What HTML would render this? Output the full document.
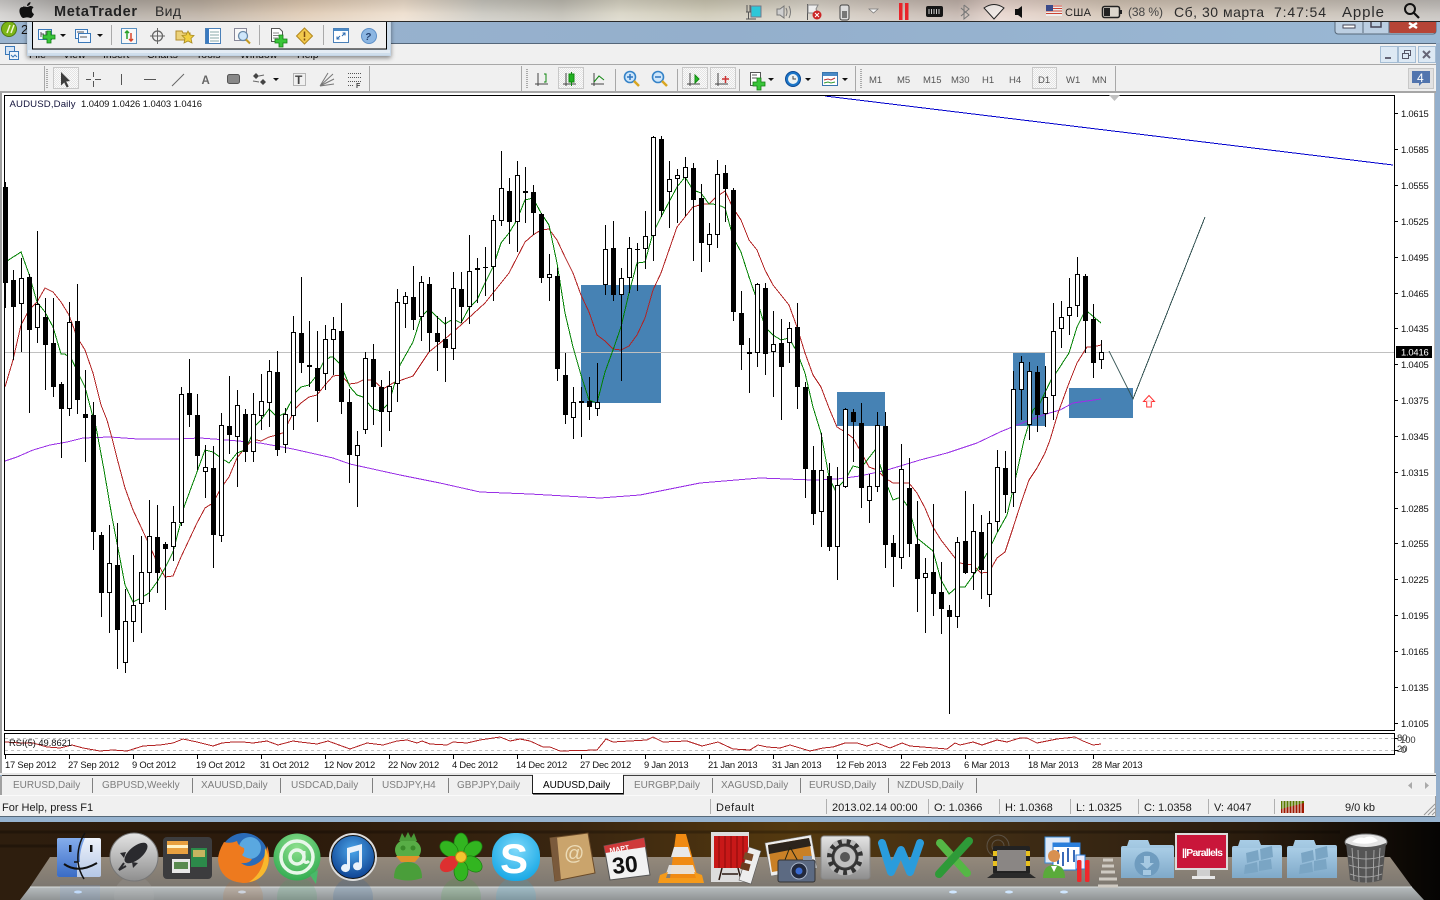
<!DOCTYPE html>
<html><head><meta charset="utf-8"><title>MetaTrader</title>
<style>
html,body{margin:0;padding:0;width:1440px;height:900px;overflow:hidden;background:#000}
svg{display:block}
text{font-family:"Liberation Sans","Noto Sans CJK SC",sans-serif;font-size:10px;fill:#111}
.ax text,.ax{font-size:9.4px;fill:#111;letter-spacing:-.2px}
.tab{font-size:10px;fill:#7d7d7d}
.st{font-size:11px;fill:#1c1c1c}
.tf{font-size:9.5px;fill:#555}
.mn{font-size:14px;fill:#2b2b2b}
.c{shape-rendering:crispEdges}
</style></head><body>
<svg width="1440" height="900" viewBox="0 0 1440 900" xmlns="http://www.w3.org/2000/svg">
<defs>
<linearGradient id="mb" x1="0" x2="1" y1="0" y2="0">
<stop offset="0" stop-color="#cfcdcb"/><stop offset=".05" stop-color="#a9a6a3"/><stop offset=".14" stop-color="#b8ab9d"/><stop offset=".21" stop-color="#dcc6ae"/><stop offset=".28" stop-color="#ecdcca"/><stop offset=".335" stop-color="#c6c4bc"/><stop offset=".39" stop-color="#bcb9af"/><stop offset=".43" stop-color="#d6d2c2"/><stop offset=".49" stop-color="#c9c4b0"/><stop offset=".56" stop-color="#d5cfc4"/><stop offset=".665" stop-color="#bfb0a8"/><stop offset=".695" stop-color="#e6d2ca"/><stop offset=".77" stop-color="#cfc0b0"/><stop offset=".9" stop-color="#c8beb2"/><stop offset="1" stop-color="#c0bcb8"/>
</linearGradient>
<linearGradient id="mbv" x1="0" x2="0" y1="0" y2="1"><stop offset="0" stop-color="#000" stop-opacity=".1"/><stop offset=".6" stop-color="#fff" stop-opacity=".12"/><stop offset="1" stop-color="#fff" stop-opacity=".3"/></linearGradient>
<linearGradient id="dk" x1="0" x2="1" y1="0" y2="0">
<stop offset="0" stop-color="#2e1e0e"/><stop offset=".2" stop-color="#2b1a0c"/><stop offset=".4" stop-color="#3a2610"/><stop offset=".55" stop-color="#54390f"/><stop offset=".72" stop-color="#3c2a14"/><stop offset=".87" stop-color="#2a1c0e"/><stop offset=".96" stop-color="#120c06"/><stop offset="1" stop-color="#050403"/>
</linearGradient>
<linearGradient id="sh" x1="0" x2="0" y1="0" y2="1"><stop offset="0" stop-color="#94897b"/><stop offset="1" stop-color="#7c7770"/></linearGradient>
<linearGradient id="ban" x1="0" x2="0" y1="0" y2="1"><stop offset="0" stop-color="#b6bcbe"/><stop offset="1" stop-color="#8f9394"/></linearGradient>
<linearGradient id="fold" x1="0" x2="0" y1="0" y2="1"><stop offset="0" stop-color="#a9cde6"/><stop offset="1" stop-color="#7fa9c9"/></linearGradient>
<linearGradient id="silver" x1="0" x2="0" y1="0" y2="1"><stop offset="0" stop-color="#e4e4e4"/><stop offset="1" stop-color="#8e8e8e"/></linearGradient>
<linearGradient id="fin" x1="0" x2="0" y1="0" y2="1"><stop offset="0" stop-color="#85adec"/><stop offset="1" stop-color="#3a6cc6"/></linearGradient>
<linearGradient id="fin2" x1="0" x2="0" y1="0" y2="1"><stop offset="0" stop-color="#eef3fb"/><stop offset="1" stop-color="#b5c7e6"/></linearGradient>
<radialGradient id="blu" cx=".5" cy=".35" r=".7"><stop offset="0" stop-color="#4ba6ea"/><stop offset="1" stop-color="#0a3b8c"/></radialGradient>
<radialGradient id="sky" cx=".5" cy=".35" r=".7"><stop offset="0" stop-color="#7fd9fa"/><stop offset="1" stop-color="#12a5e4"/></radialGradient>
<radialGradient id="grn" cx=".5" cy=".3" r=".8"><stop offset="0" stop-color="#8de08d"/><stop offset="1" stop-color="#27a54a"/></radialGradient>
<linearGradient id="tit" x1="0" x2="1" y1="0" y2="0"><stop offset="0" stop-color="#9ab4cf"/><stop offset=".5" stop-color="#94afcc"/><stop offset="1" stop-color="#9ab8d4"/></linearGradient>
<pattern id="dot" width="2" height="2" patternUnits="userSpaceOnUse"><rect width="2" height="2" fill="#fafafa"/><rect width="1" height="1" fill="#e4e4e4"/><rect x="1" y="1" width="1" height="1" fill="#e4e4e4"/></pattern>
<path id="plus" d="M-2-6h4v4h4v4h-4v4h-4v-4h-4v-4h4z" fill="#39c539" stroke="#137d13" stroke-width=".8"/>
<path id="dd" d="M0 0h6l-3 3z" fill="#111"/>
<filter id="ds" x="-5%" y="-20%" width="110%" height="150%"><feDropShadow dx="0" dy="2" stdDeviation="2.5" flood-color="#000" flood-opacity=".45"/></filter>
</defs>

<!-- window base -->
<rect width="1440" height="900" fill="#94afcc"/>
<rect y="22" width="1440" height="21" fill="url(#tit)"/>
<rect y="43" width="1436" height="1" fill="#55677a"/>
<rect x="0" y="44" width="1436" height="21" fill="#f0f0f0"/>
<rect x="0" y="64" width="1436" height="1" fill="#a8a8a8"/>
<rect x="0" y="65" width="1436" height="26" fill="#f0f0f0"/>
<rect x="0" y="91" width="1436" height="2" fill="#a6a6a6"/>
<rect x="0" y="93" width="1435" height="682" fill="#fff"/>
<rect x="0" y="93" width="2" height="682" fill="#a0a0a0"/>
<rect x="1434" y="93" width="1" height="682" fill="#bcbcbc"/>

<!-- menu text under floating toolbar -->
<g><text x="29" y="58" style="font-size:10.5px">File</text><text x="63" y="58" style="font-size:10.5px">View</text><text x="103" y="58" style="font-size:10.5px">Insert</text><text x="147" y="58" style="font-size:10.5px">Charts</text><text x="196" y="58" style="font-size:10.5px">Tools</text><text x="240" y="58" style="font-size:10.5px">Window</text><text x="297" y="58" style="font-size:10.5px">Help</text></g>

<!-- doc icon -->
<g><rect x="5.5" y="46.5" width="9" height="8" fill="#d7e6f7" stroke="#3a78b8"/><rect x="9.5" y="51.5" width="9" height="8" fill="#eef5fb" stroke="#3a78b8"/><path d="M11 55l2 2 2-2 2 2" stroke="#3a78b8" fill="none"/></g>

<!-- title icon -->
<circle cx="9" cy="29" r="7.5" fill="#7cb518" stroke="#4c7a10"/>
<path d="M7 33l3-8M11 33l3-8" stroke="#f4f8d0" stroke-width="1.500"/>
<text x="21" y="34" style="font-size:13px">2</text>

<!-- top window controls -->
<rect x="1335" y="14" width="101" height="20" rx="3" fill="#bccfe2" stroke="#57687a"/>
<rect x="1389" y="15" width="47" height="18" rx="2" fill="#b64436"/>
<path d="M1363 15v18M1389 15v18" stroke="#57687a"/>
<rect x="1343" y="25" width="12" height="3" fill="#fff" stroke="#445"/>
<rect x="1371" y="19" width="10" height="8" fill="none" stroke="#445" stroke-width="1.5"/>
<path d="M1409 23l8 5M1417 23l-8 5" stroke="#fff" stroke-width="2.5"/>

<!-- right window buttons -->
<g fill="#dde9f4" stroke="#a5bdd4"><rect x="1380.5" y="46.5" width="17" height="16"/><rect x="1398.5" y="46.5" width="17" height="16"/><rect x="1418.5" y="46.5" width="17" height="16"/></g>
<path d="M1385 58h6" stroke="#667" stroke-width="2"/>
<rect x="1402.5" y="53.5" width="6" height="5" fill="none" stroke="#556"/><path d="M1404.5 53v-2.5h6v5h-2" fill="none" stroke="#556"/>
<path d="M1423 51l7 7M1430 51l-7 7" stroke="#667" stroke-width="2"/>
<rect x="1408.5" y="68.5" width="25" height="20" fill="#e2e2e2" stroke="#c8c8c8"/>
<path d="M1412 71h18v12h-8l-3 3v-3h-7z" fill="#5275ae"/><text x="1417" y="82" style="font-size:12px;fill:#fff">4</text>

<!-- toolbar row -->
<g class="c" stroke="#a8a8a8"><path d="M44.5 66v25M369.5 66v25M521.5 66v25M615.5 69v22M677.5 69v22M739.5 69v22M855.5 66v25M1115.5 66v25"/></g>
<path d="M47 69v20M527 69v20M861 69v20" stroke="#aaa" stroke-width="2" stroke-dasharray="1 1"/>
<g fill="url(#dot)" stroke="#c8c8c8"><rect x="53.5" y="67.5" width="25" height="21"/><rect x="558.5" y="67.5" width="25" height="21"/><rect x="682.5" y="67.5" width="25" height="21"/><rect x="710.5" y="67.5" width="25" height="21"/><rect x="1032.5" y="67.5" width="24" height="21"/></g>
<path d="M61 72l9 9-3.8.5 2.5 5-2 1-2.5-5-3.2 3z" fill="#3d3d3d"/>
<path d="M86 79.5h5M95 79.5h6M93.5 72v5M93.5 81v6" stroke="#555"/>
<path d="M121.5 74v11" stroke="#555"/><path d="M144 79.5h12" stroke="#555"/><path d="M172 86l12-12" stroke="#666"/>
<text x="201.500" y="84" style="font-size:11.5px;font-weight:bold;fill:#666">A</text>
<rect x="227.500" y="74.500" width="12" height="9" rx="2" fill="#888" stroke="#555"/>
<path d="M256 73l3 3-3 3-3-3zM263 79l3 3-3 3-3-3z" fill="#444"/><path d="M259 76l5-1M253 81l6 1" stroke="#666"/>
<use href="#dd" x="273" y="78"/>
<rect x="293.500" y="73.500" width="12" height="12" fill="none" stroke="#777" stroke-dasharray="1 1"/><text x="295" y="84" style="font-size:12px;font-weight:bold;fill:#444">T</text>
<path d="M320 86l13-12M320 86l14-7M320 86l14-2M320 86l8-13" stroke="#777"/>
<path d="M348 73.500h13M348 77.500h13M348 81.500h13M348 85.500h6" stroke="#555" stroke-dasharray="1 1"/><text x="356" y="88" style="font-size:7px;font-weight:bold;fill:#444">F</text>

<!-- chart type icons -->
<g stroke="#444" fill="none"><path d="M538 73v13M535 84h13"/><path d="M566 73v13M563 84h13"/><path d="M594 73v13M591 84h13"/><path d="M690 73v13M687 84h13"/><path d="M718 73v13M715 84h13"/></g>
<path d="M544 74h2v8h-2" stroke="#118811" fill="none"/>
<path d="M571.500 72v14" stroke="#118811"/><rect x="569" y="74" width="5" height="8" fill="#21b021" stroke="#118811"/>
<path d="M594 82l5-6 5 4" stroke="#118811" fill="none"/>
<path d="M695 75l4 4-4 4z" fill="#22bb22" stroke="#118811"/>
<path d="M722 79h7M725.500 76v7" stroke="#c33" stroke-width="1.5"/>

<!-- zoom icons -->
<g><circle cx="630" cy="77" r="5.500" fill="#cfe7fb" stroke="#3583c8" stroke-width="1.600"/><path d="M634 81l5 5" stroke="#d9a520" stroke-width="2.500"/><path d="M627 77h6M630 74v6" stroke="#2f75bf" stroke-width="1.500"/>
<circle cx="658" cy="77" r="5.500" fill="#cfe7fb" stroke="#3583c8" stroke-width="1.600"/><path d="M662 81l5 5" stroke="#d9a520" stroke-width="2.500"/><path d="M655 77h6" stroke="#2f75bf" stroke-width="1.500"/></g>

<!-- indicators -->
<rect x="750.500" y="72.500" width="10" height="13" fill="#fff" stroke="#555"/><path d="M752 75h5M752 78h5" stroke="#555"/><use href="#plus" x="759" y="84"/><use href="#dd" x="768" y="78"/>
<circle cx="793" cy="79" r="7.500" fill="#1d76c8" stroke="#0c4a94"/><circle cx="793" cy="79" r="5" fill="#eef3f3"/><path d="M793 76v3h3" stroke="#444" fill="none"/><use href="#dd" x="805" y="78"/>
<rect x="822.500" y="72.500" width="15" height="13" fill="#fff" stroke="#3975ad"/><rect x="823" y="73" width="14" height="3" fill="#4a8ac6"/><path d="M824 80l4-1 3 1 4-2" stroke="#b33" fill="none"/><path d="M824 83l4-1 3 1 4-1" stroke="#393" fill="none"/><use href="#dd" x="842" y="78"/>

<!-- timeframes -->
<text class="tf" x="869" y="83">M1</text><text class="tf" x="897" y="83">M5</text><text class="tf" x="923" y="83">M15</text><text class="tf" x="951" y="83">M30</text><text class="tf" x="982" y="83">H1</text><text class="tf" x="1009" y="83">H4</text><text class="tf" x="1038" y="83">D1</text><text class="tf" x="1066" y="83">W1</text><text class="tf" x="1092" y="83">MN</text>

<!-- chart -->
<g class="c">
<rect x="581" y="285" width="80" height="118" fill="#4682b4"/>
<rect x="837" y="392" width="48" height="34" fill="#4682b4"/>
<rect x="1013" y="353" width="32" height="73" fill="#4682b4"/>
<rect x="1069" y="388" width="64" height="30" fill="#4682b4"/>
<path d="M5 352.500H1394" stroke="#c0c0c0"/>
</g>
<g fill="none" stroke-width="1" class="c">
<polyline stroke="#9a30e6" points="5,461 17,457 33,450 50,445 67,442 83,438 110,437 138,439 177,439 200,438 227,440 260,443 293,449 333,458 350,464 400,475 440,483 480,492 530,494 600,498 640,495 700,483 760,478 813,480 837,479 860,476 887,470 920,460 947,453 977,443 1000,432 1017,425 1043,415 1060,410 1073,403 1101,399"/>
<polyline stroke="#b22222" points="5,387 13,360 21,325 29,310 37,302 45,288 53,292 61,302 69,315 77,337 85,350 93,373 101,405 107,420 112,438 117,458 125,488 133,510 141,527 147,540 157,562 165,577 173,576 181,557 197,523 205,508 213,503 221,488 229,477 237,458 245,448 253,439 261,441 269,437 277,435 285,432 288,423 296,408 301,403 309,397 317,395 325,385 333,376 341,375 349,384 357,383 363,380 373,380 383,389 393,383 413,376 429,352 445,339 461,325 485,303 493,293 509,273 525,242 533,235 541,230 549,229 557,240 565,257 573,273 581,295 589,312 597,335 605,341 613,349 621,350 629,346 637,335 645,318 653,290 661,273 669,250 677,227 685,217 693,207 703,204 709,204 715,198 725,191 733,208 741,220 749,240 757,250 765,270 773,285 781,295 789,305 797,327 805,353 813,375 821,387 829,408 837,427 845,432 853,438 861,452 869,467 877,470 885,478 893,483 909,483 917,493 925,508 933,527 941,540 955,558 960,563 973,565 981,573 989,572 997,558 1005,552 1013,528 1021,503 1029,480 1037,468 1045,453 1050,440 1058,413 1069,383 1077,363 1087,347 1093,347 1101,345"/>
<polyline stroke="#008000" points="7,261 21,252 29,274 37,302 45,312 53,327 61,354 65,354 72,360 80,377 85,387 93,417 96,427 104,470 112,517 117,543 125,585 133,602 141,598 149,593 157,582 165,568 173,552 180,525 184,507 197,472 205,450 213,452 221,458 229,463 237,453 245,450 253,433 256,425 261,420 269,409 277,417 285,413 296,392 301,387 309,385 317,375 323,363 330,357 333,357 341,365 350,387 357,395 363,397 373,409 381,411 389,403 400,365 413,342 421,317 429,309 437,317 445,324 453,319 461,323 469,308 477,300 485,283 493,267 501,243 509,233 517,220 525,200 533,198 541,213 549,225 557,263 565,313 573,347 581,375 589,400 597,403 605,372 613,350 621,327 629,293 637,263 645,262 653,233 661,217 669,202 677,187 685,177 693,190 701,193 709,204 713,204 721,206 725,208 733,237 741,252 749,277 757,300 765,327 773,335 781,340 789,338 797,352 805,373 813,407 821,433 829,477 835,490 845,480 853,466 861,468 875,450 885,480 893,500 901,497 909,508 917,538 933,551 941,580 949,594 957,587 965,587 977,570 989,550 997,533 1007,515 1013,490 1024,440 1033,410 1040,403 1052,378 1056,373 1069,353 1077,327 1083,315 1088,312 1101,323"/>
<path stroke="#0000cd" d="M825 96L1393 165"/>
<path stroke="#2f4f4f" d="M1109 351L1133 399L1205 217"/>
</g>

<!-- wicks -->
<path class="c" stroke="#000" fill="none" d="M5.500 182V308M13.500 270V360M21.500 258V352M29.500 274V413M37.500 231V343M45.500 298V390M53.500 298V397M61.500 382V458M69.500 302V416M77.500 284V414M85.500 370V462M93.500 402V550M101.500 532V617M109.500 525V633M117.500 523V669M125.500 589V673M133.500 555V642M141.500 536V633M149.500 500V602M157.500 505V593M165.500 542V610M173.500 506V561M181.500 387V526M189.500 359V427M197.500 394V470M205.500 445V498M213.500 446V568M221.500 413V542M229.500 376V454M237.500 390V487M245.500 409V462M253.500 393V462M261.500 374V430M269.500 360V427M277.500 351V456M285.500 408V453M293.500 316V430M301.500 277V373M309.500 321V387M317.500 331V422M325.500 325V390M333.500 317V375M341.500 303V414M349.500 389V483M357.500 431V507M365.500 352V434M373.500 344V425M381.500 380V447M389.500 371V431M397.500 289V402M405.500 292V328M413.500 266V330M421.500 276V341M429.500 277V352M437.500 316V371M445.500 317V382M453.500 272V360M461.500 272V323M469.500 235V324M477.500 258V303M485.500 247V296M493.500 215V301M501.500 151V226M509.500 178V244M517.500 161V252M525.500 167V223M533.500 185V235M541.500 213V283M549.500 254V301M557.500 268V381M565.500 353V424M573.500 387V439M581.500 387V437M589.500 377V420M597.500 363V416M605.500 225V295M613.500 221V301M621.500 268V381M629.500 237V293M637.500 243V291M645.500 211V269M653.500 136V261M661.500 136V217M669.500 161V228M677.500 169V223M685.500 157V216M693.500 163V261M701.500 184V272M709.500 223V262M717.500 160V248M725.500 165V222M733.500 188V321M741.500 291V370M749.500 338V393M757.500 283V367M765.500 283V375M773.500 311V397M781.500 319V420M789.500 322V363M797.500 303V409M805.500 382V498M813.500 446V525M821.500 433V547M829.500 463V551M837.500 467V580M845.500 408V488M853.500 409V462M861.500 403V508M869.500 474V523M877.500 412V492M885.500 412V568M893.500 535V587M901.500 444V569M909.500 458V557M917.500 501V612M925.500 558V633M933.500 504V616M941.500 562V634M949.500 605V714M957.500 537V628M965.500 491V574M973.500 504V590M981.500 515V599M989.500 511V607M997.500 450V532M1005.500 451V513M1013.500 371V507M1021.500 356V420M1029.500 362V440M1037.500 366V432M1045.500 366V427M1053.500 303V420M1061.500 301V348M1069.500 278V335M1077.500 257V317M1085.500 274V353M1093.500 304V378M1101.500 340V369"/>
<!-- black bodies -->
<path class="c" fill="#000" d="M3 187h5V283h-5zM11 280h5V307h-5zM27 277h5V330h-5zM43 317h5V345h-5zM51 343h5V387h-5zM59 384h5V409h-5zM75 321h5V400h-5zM83 414h5V418h-5zM91 415h5V532h-5zM99 535h5V593h-5zM115 565h5V630h-5zM155 537h5V573h-5zM163 544h5V549h-5zM187 393h5V415h-5zM195 415h5V456h-5zM211 468h5V535h-5zM227 426h5V435h-5zM243 414h5V452h-5zM275 372h5V450h-5zM299 333h5V363h-5zM307 365h5V367h-5zM315 368h5V391h-5zM339 331h5V402h-5zM347 402h5V455h-5zM371 359h5V387h-5zM379 387h5V412h-5zM411 297h5V320h-5zM427 284h5V333h-5zM435 333h5V342h-5zM443 339h5V348h-5zM459 289h5V307h-5zM483 267h5V268h-5zM507 191h5V222h-5zM523 191h5V193h-5zM531 192h5V213h-5zM539 214h5V278h-5zM555 276h5V369h-5zM563 375h5V415h-5zM579 401h5V403h-5zM587 401h5V407h-5zM611 248h5V295h-5zM635 249h5V250h-5zM659 139h5V211h-5zM691 168h5V200h-5zM699 198h5V243h-5zM723 173h5V189h-5zM731 190h5V312h-5zM739 313h5V345h-5zM763 288h5V354h-5zM779 343h5V367h-5zM795 327h5V387h-5zM803 387h5V469h-5zM811 470h5V514h-5zM827 476h5V547h-5zM851 412h5V422h-5zM859 423h5V488h-5zM883 426h5V545h-5zM891 543h5V557h-5zM907 488h5V544h-5zM915 544h5V579h-5zM931 572h5V594h-5zM939 592h5V609h-5zM947 610h5V617h-5zM963 541h5V573h-5zM979 532h5V570h-5zM1003 468h5V495h-5zM1035 372h5V415h-5zM1083 276h5V321h-5zM1091 319h5V363h-5z"/>
<!-- white bodies -->
<path class="c" fill="#fff" stroke="#000" d="M19.500 278.500h4V303.500h-4zM35.500 304.500h4V327.500h-4zM67.500 322.500h4V408.500h-4zM107.500 563.500h4V592.500h-4zM123.500 621.500h4V662.500h-4zM131.500 605.500h4V621.500h-4zM139.500 572.500h4V603.500h-4zM147.500 536.500h4V572.500h-4zM171.500 522.500h4V546.500h-4zM179.500 394.500h4V522.500h-4zM203.500 467.500h4V471.500h-4zM219.500 425.500h4V535.500h-4zM235.500 405.500h4V436.500h-4zM251.500 414.500h4V451.500h-4zM259.500 401.500h4V415.500h-4zM267.500 371.500h4V402.500h-4zM283.500 414.500h4V444.500h-4zM291.500 332.500h4V415.500h-4zM323.500 339.500h4V373.500h-4zM331.500 329.500h4V339.500h-4zM355.500 445.500h4V455.500h-4zM363.500 358.500h4V429.500h-4zM387.500 386.500h4V411.500h-4zM395.500 302.500h4V383.500h-4zM403.500 296.500h4V303.500h-4zM419.500 282.500h4V316.500h-4zM451.500 288.500h4V348.500h-4zM467.500 271.500h4V306.500h-4zM475.500 268.500h4V269.500h-4zM491.500 220.500h4V266.500h-4zM499.500 188.500h4V220.500h-4zM515.500 175.500h4V221.500h-4zM547.500 274.500h4V277.500h-4zM571.500 402.500h4V417.500h-4zM595.500 402.500h4V408.500h-4zM603.500 249.500h4V284.500h-4zM619.500 278.500h4V294.500h-4zM627.500 248.500h4V277.500h-4zM643.500 236.500h4V248.500h-4zM651.500 137.500h4V235.500h-4zM667.500 179.500h4V191.500h-4zM675.500 175.500h4V178.500h-4zM683.500 167.500h4V177.500h-4zM707.500 234.500h4V244.500h-4zM715.500 174.500h4V234.500h-4zM747.500 352.500h4V353.500h-4zM755.500 284.500h4V352.500h-4zM771.500 344.500h4V351.500h-4zM787.500 328.500h4V342.500h-4zM819.500 470.500h4V511.500h-4zM835.500 485.500h4V546.500h-4zM843.500 409.500h4V486.500h-4zM867.500 486.500h4V500.500h-4zM875.500 425.500h4V486.500h-4zM899.500 469.500h4V557.500h-4zM923.500 573.500h4V577.500h-4zM955.500 542.500h4V616.500h-4zM971.500 531.500h4V572.500h-4zM987.500 523.500h4V594.500h-4zM995.500 467.500h4V521.500h-4zM1011.500 389.500h4V492.500h-4zM1019.500 362.500h4V389.500h-4zM1027.500 371.500h4V424.500h-4zM1043.500 397.500h4V413.500h-4zM1051.500 331.500h4V395.500h-4zM1059.500 317.500h4V328.500h-4zM1067.500 307.500h4V315.500h-4zM1075.500 274.500h4V305.500h-4zM1099.500 352.500h4V359.500h-4z"/>

<!-- red arrow -->
<path d="M1149 395.500l5.500 6h-3.200v5.500h-4.600v-5.500h-3.200z" fill="#fff" stroke="#ff3333"/>
<path d="M1146 401h6" stroke="#ffc0c0"/>

<!-- frames -->
<g class="c" fill="none" stroke="#000">
<rect x="4.500" y="95.500" width="1390" height="635"/>
<rect x="4.500" y="733.500" width="1390" height="21"/>
<path d="M1395 113.500h3M1395 149.500h3M1395 185.500h3M1395 221.500h3M1395 257.500h3M1395 293.500h3M1395 328.500h3M1395 364.500h3M1395 400.500h3M1395 436.500h3M1395 472.500h3M1395 508.500h3M1395 543.500h3M1395 579.500h3M1395 615.500h3M1395 651.500h3M1395 687.500h3M1395 723.500h3M1395 738.500h3M1395 750.500h3"/>
<path d="M5.500 755v4M69.500 755v4M133.500 755v4M197.500 755v4M261.500 755v4M325.500 755v4M389.500 755v4M453.500 755v4M517.500 755v4M581.500 755v4M645.500 755v4M709.500 755v4M773.500 755v4M837.500 755v4M901.500 755v4M965.500 755v4M1029.500 755v4M1093.500 755v4"/>
</g>
<path d="M1109 95h11l-5.500 6z" fill="#c0c0c0"/>
<text x="9.500" y="107" style="font-size:9.600px;fill:#14143c" textLength="66">AUDUSD,Daily</text>
<text x="81" y="107" style="font-size:9.400px" textLength="121">1.0409 1.0426 1.0403 1.0416</text>

<g class="ax">
<text x="1401" y="117">1.0615</text><text x="1401" y="153">1.0585</text><text x="1401" y="189">1.0555</text><text x="1401" y="225">1.0525</text><text x="1401" y="261">1.0495</text><text x="1401" y="297">1.0465</text><text x="1401" y="332">1.0435</text><text x="1401" y="368">1.0405</text><text x="1401" y="404">1.0375</text><text x="1401" y="440">1.0345</text><text x="1401" y="476">1.0315</text><text x="1401" y="512">1.0285</text><text x="1401" y="547">1.0255</text><text x="1401" y="583">1.0225</text><text x="1401" y="619">1.0195</text><text x="1401" y="655">1.0165</text><text x="1401" y="691">1.0135</text><text x="1401" y="727">1.0105</text>
</g>
<rect x="1396" y="346" width="36" height="12" fill="#000"/><text x="1401" y="355.500" style="font-size:9.400px;fill:#fff;letter-spacing:-.2px">1.0416</text>

<!-- RSI -->
<g class="c"><path d="M5 738.500H1394M5 750.500H1394" stroke="#c0c0c0" stroke-dasharray="3 3" fill="none"/>
<polyline fill="none" stroke="#b22222" points="5,742 20,743 33,743 47,747 60,748 72,745 83,748 100,751 113,750 127,751 143,746 160,745 173,743 183,739 197,742 213,746 222,743 233,742 243,742 253,743 267,741 278,745 293,741 300,742 317,744 328,741 350,749 367,743 383,745 397,741 407,740 417,743 422,741 430,744 447,745 453,742 467,743 480,740 500,737 510,741 520,739 530,741 543,747 550,747 560,751 597,750 606,739 613,742 630,741 647,740 653,737 663,742 687,741 702,746 718,742 733,749 750,750 758,745 767,747 780,748 790,745 810,751 823,748 833,747 845,743 857,743 867,746 877,743 890,748 902,743 910,746 947,749 955,743 960,745 973,742 982,745 997,740 1007,742 1020,738 1027,738 1037,743 1057,739 1075,737 1083,741 1093,745 1101,744"/></g>
<text x="9" y="746" style="font-size:9.400px" textLength="63">RSI(5) 49.8621</text>
<text x="1397" y="741" style="font-size:9.400px;fill:#333">80</text><text x="1400" y="743" style="font-size:9.400px;fill:#333">100</text>
<text x="1397" y="752" style="font-size:9.400px;fill:#333">20</text><text x="1401" y="753" style="font-size:9.400px;fill:#333">0</text>

<!-- dates -->
<g class="ax">
<text x="5" y="768">17 Sep 2012</text><text x="68" y="768">27 Sep 2012</text><text x="132" y="768">9 Oct 2012</text><text x="196" y="768">19 Oct 2012</text><text x="260" y="768">31 Oct 2012</text><text x="324" y="768">12 Nov 2012</text><text x="388" y="768">22 Nov 2012</text><text x="452" y="768">4 Dec 2012</text><text x="516" y="768">14 Dec 2012</text><text x="580" y="768">27 Dec 2012</text><text x="644" y="768">9 Jan 2013</text><text x="708" y="768">21 Jan 2013</text><text x="772" y="768">31 Jan 2013</text><text x="836" y="768">12 Feb 2013</text><text x="900" y="768">22 Feb 2013</text><text x="964" y="768">6 Mar 2013</text><text x="1028" y="768">18 Mar 2013</text><text x="1092" y="768">28 Mar 2013</text>
</g>

<!-- tabs -->
<rect x="0" y="773" width="1436" height="2" fill="#e8e8e8"/>
<rect x="2" y="775" width="1434" height="1" fill="#404040"/>
<rect x="0" y="776" width="1436" height="19" fill="#f0f0f0"/>
<rect x="0" y="776" width="2" height="19" fill="#a0a0a0"/>
<rect x="0" y="795" width="1436" height="1" fill="#fafafa"/>
<text class="tab" x="13" y="788">EURUSD,Daily</text><text class="tab" x="102" y="788">GBPUSD,Weekly</text><text class="tab" x="201" y="788">XAUUSD,Daily</text><text class="tab" x="291" y="788">USDCAD,Daily</text><text class="tab" x="382" y="788">USDJPY,H4</text><text class="tab" x="457" y="788">GBPJPY,Daily</text>
<text class="tab" x="634" y="788">EURGBP,Daily</text><text class="tab" x="721" y="788">XAGUSD,Daily</text><text class="tab" x="809" y="788">EURUSD,Daily</text><text class="tab" x="897" y="788">NZDUSD,Daily</text>
<path class="c" d="M92.500 778v15M192.500 778v15M280.500 778v15M372.500 778v15M448.500 778v15M712.500 778v15M800.500 778v15M888.500 778v15M976.500 778v15" stroke="#808080"/>
<path class="c" d="M532.500 775.500V793.500H623.500V775.500" fill="#fff" stroke="#000"/>
<rect x="533" y="774" width="90" height="2" fill="#fff"/>
<path class="c" d="M533 794.500H624" stroke="#777"/>
<path class="c" d="M532.500 775V794M623.500 775V794" stroke="#222"/>
<text x="543" y="788" style="font-size:10px;fill:#000">AUDUSD,Daily</text>
<path d="M1412 782l-4 3.500 4 3.500zM1425 782l4 3.500-4 3.500z" fill="#aaa"/>

<!-- status -->
<rect x="0" y="796" width="1436" height="20" fill="#f0f0f0"/>
<rect x="0" y="816" width="1436" height="1" fill="#566878"/>
<rect x="1435" y="796" width="1" height="21" fill="#a0a0a0"/>
<path class="c" d="M710.500 799v15M826.500 799v15M928.500 799v15M999.500 799v15M1070.500 799v15M1138.500 799v15M1208.500 799v15M1274.500 799v15" stroke="#b0b0b0"/>
<text class="st" x="2" y="811">For Help, press F1</text><text class="st" x="716" y="811" textLength="38">Default</text><text class="st" x="832" y="811">2013.02.14 00:00</text><text class="st" x="934" y="811">O: 1.0366</text><text class="st" x="1005" y="811">H: 1.0368</text><text class="st" x="1076" y="811">L: 1.0325</text><text class="st" x="1144" y="811">C: 1.0358</text><text class="st" x="1214" y="811">V: 4047</text><text class="st" x="1345" y="811">9/0 kb</text>
<g class="c"><path d="M1281 801h23v6l-23 2z" fill="#5a7a00"/><path d="M1281 809l23-6v10h-23z" fill="#a01800"/><path d="M1283 801v13M1286 801v13M1289 801v13M1292 801v13M1295 801v13M1298 801v13M1301 801v13" stroke="#f0f0f0"/></g>
<path d="M1424 815l11-11M1428 815l7-7M1432 815l3-3" stroke="#999"/>

<rect y="817" width="1440" height="5" fill="#97b3cf"/>

<!-- floating toolbar -->
<g filter="url(#ds)"><rect x="27" y="15" width="364" height="41" fill="#c4d5e6"/></g>
<rect x="28" y="22" width="362" height="33" fill="#cfdeec"/>
<rect x="28" y="50" width="362" height="3" fill="#e4ecf4"/>
<rect x="32.500" y="20.500" width="354" height="28.500" fill="#f0f0f0" stroke="#000"/>
<path class="c" d="M111.500 25v20M259.500 25v20M323.500 25v20" stroke="#aaa"/>
<rect x="38.500" y="29.500" width="13" height="10" fill="#f4f8ff" stroke="#3a78b8"/><path d="M41 32v5M41 34h3M46 31v5" stroke="#555"/><use href="#plus" x="49" y="37"/><use href="#dd" x="60" y="34"/>
<rect x="75.500" y="29.500" width="12" height="9" fill="#f4f8ff" stroke="#3a78b8"/><rect x="78.500" y="33.500" width="12" height="9" fill="#f4f8ff" stroke="#3a78b8"/><path d="M77 32h7M80 37h7" stroke="#555"/><use href="#dd" x="97" y="34"/>
<rect x="121.500" y="28.500" width="15" height="15" fill="#f8f8f8" stroke="#5a90c0"/><path d="M127 31v8M125 33l2-2 2 2" stroke="#2aa02a" fill="none" stroke-width="1.500"/><path d="M131 33v8M129 39l2 2 2-2" stroke="#d9452a" fill="none" stroke-width="1.500"/>
<circle cx="157.500" cy="36" r="5" fill="none" stroke="#666" stroke-width="1.300"/><path d="M157.500 28v16M150 36h15" stroke="#666"/>
<path d="M176 31h6l1 2h7v7h-14z" fill="#ecd27a" stroke="#b28b2a"/><path d="M188 31l2 4 4 .5-3 3 1 4.500-4-2-4 2 1-4.500-3-3 4-.5z" fill="#f1cf3f" stroke="#a68a20" stroke-width=".8"/>
<rect x="205.500" y="28.500" width="15" height="15" fill="#fff" stroke="#4a80b8"/><rect x="206" y="29" width="3" height="14" fill="#3a7ac0"/><path d="M210 32h9M210 35h9M210 38h9M210 41h9" stroke="#8aa"/>
<rect x="234.500" y="28.500" width="12" height="12" fill="#f8f8f8" stroke="#889"/><circle cx="243" cy="36" r="4.500" fill="#cfe7fb" stroke="#6a8aa8" stroke-width="1.300"/><path d="M246 39.500l4 4" stroke="#c49a20" stroke-width="2"/>
<path d="M271.500 28.500h8l3 3v10h-11z" fill="#fff" stroke="#555"/><path d="M273 33h6M273 35.500h6M273 38h5" stroke="#888"/><use href="#plus" x="281" y="41"/>
<path d="M304.500 28l8 8-8 8-8-8z" fill="#f2c94c" stroke="#b2871e"/><path d="M304.500 31.500v5.500M304.500 38.500v2" stroke="#7a4a10" stroke-width="1.500"/>
<rect x="333.500" y="28.500" width="15" height="14" fill="#fff" stroke="#4a80b8"/><rect x="334" y="29" width="14" height="2" fill="#4a8ac6"/><path d="M337 39l3-3M337 36.500v2.500h2.500M345 33l-3 3M345 35.500V33h-2.500" stroke="#2a6ab0" fill="none"/>
<circle cx="369" cy="36" r="7.500" fill="#8cb6e2" stroke="#5d8fc6"/><text x="365" y="40" style="font-size:10px;font-weight:bold;font-style:italic;fill:#24406e">?</text>

<!-- mac menu bar -->
<rect width="1440" height="22" fill="url(#mb)"/><rect width="1440" height="22" fill="url(#mbv)"/>
<rect y="21" width="1440" height="1" fill="#2a2a2a"/>
<path d="M23 7c-4 0-4 4-3 7 1 2.500 2 4 3.500 4 1 0 1.500-.6 3.500-.6s2.500.6 3.500.6c1.500 0 3-2.500 3.500-4-2.500-1-3-5-.5-6.500-1-1.500-3-1.700-4-1.300-1.500.5-2 .8-2.500.8s-1.500-.5-4-.5zM27 6c0-2 1.500-3.500 3.500-4 .2 2-1.500 4-3.500 4z" fill="#111"/>
<text x="54" y="16" style="font-size:14.500px;font-weight:bold;fill:#222" textLength="83">MetaTrader</text>
<text class="mn" x="155" y="16" textLength="26">Вид</text>

<!-- status icons -->
<g><rect x="751" y="6" width="10" height="11" fill="#2ec7d8" stroke="#778"/><path d="M747 5v7M750 5v7M746 12h5M748.500 12v7M746 19h10" stroke="#555" fill="none"/></g>
<path d="M777 9h3l4-3v12l-4-3h-3z" fill="#cfcfcf" stroke="#777"/><path d="M786 8q2 4 0 8M789 6q3 6 0 12" stroke="#777" fill="none"/>
<path d="M807.500 4v16" stroke="#555"/><path d="M808 5h10l-2 4 2 4h-10z" fill="#eee" stroke="#888"/><circle cx="817" cy="15" r="4.500" fill="#cc2525"/><path d="M815 13l4 4M819 13l-4 4" stroke="#fff"/>
<rect x="840" y="5" width="9" height="15" rx="2" fill="#ddd" stroke="#444"/><rect x="842" y="11" width="5" height="7" fill="#777"/>
<path d="M869 9h9l-4.500 4z" fill="#f5f5f5" stroke="#777" stroke-width=".7"/>
<rect x="899" y="3" width="3.500" height="17" fill="#e8242a"/><rect x="905" y="3" width="3.500" height="17" fill="#e8242a"/>
<rect x="926" y="6" width="17" height="11" rx="2" fill="#161616"/><path d="M929 9v5M931.500 9v5M934 9v5M936.500 9v5M939 9v5" stroke="#ccc"/>
<path d="M964 5v14l5-4-8-7M964 5l5 4-8 7" stroke="#777" fill="none"/>
<path d="M984 8q10-7 20 0l-10 11z" fill="#f5f5f5" fill-opacity=".6" stroke="#222"/>
<path d="M1015 9h3l4-3v12l-4-3h-3z" fill="#111"/>
<rect x="1046" y="5" width="16" height="11" fill="#eee"/><path d="M1046 6h16M1046 8.500h16M1046 11h16M1046 13.500h16" stroke="#c43"/><rect x="1046" y="5" width="7" height="6" fill="#3a4a8a"/>
<text x="1065" y="16" style="font-size:11px;fill:#222" textLength="26">США</text>
<rect x="1102.500" y="6.500" width="17" height="11" rx="2" fill="#dcd6cc" stroke="#222" stroke-width="1.500"/><rect x="1104" y="8" width="6" height="8" fill="#222"/><rect x="1120" y="10" width="2" height="4" fill="#222"/>
<text x="1128" y="16" style="font-size:12px;fill:#444" textLength="35">(38 %)</text>
<text class="mn" x="1174" y="17" textLength="90">Сб, 30 марта</text>
<text class="mn" x="1274" y="17" textLength="52">7:47:54</text>
<text class="mn" x="1342" y="17" textLength="42" style="font-size:15px">Apple</text>
<circle cx="1410" cy="9" r="5" fill="none" stroke="#111" stroke-width="2"/><path d="M1414 13l5 5" stroke="#111" stroke-width="2.200"/>

<!-- dock -->
<rect y="822" width="1440" height="78" fill="url(#dk)"/>
<path d="M0 832h1340M0 846h60" stroke="#000" stroke-opacity=".25" stroke-width="3"/>
<polygon points="50,857 1390,857 1412,887 30,887" fill="url(#sh)"/>
<polygon points="30,887 1412,887 1424,900 20,900" fill="url(#ban)"/>
<path d="M30 887H1412" stroke="#d8dcdc"/>
<g fill="#cfe6ff"><ellipse cx="78" cy="892" rx="4" ry="1.500"/><ellipse cx="242" cy="892" rx="4" ry="1.500"/><ellipse cx="953" cy="892" rx="4" ry="1.500"/><ellipse cx="1009" cy="892" rx="4" ry="1.500"/><ellipse cx="1064" cy="892" rx="4" ry="1.500"/></g>
<g opacity=".15"><rect x="60" y="885" width="40" height="15" fill="#6f9ce0"/><circle cx="134" cy="896" r="20" fill="#bbb"/><circle cx="243" cy="897" r="20" fill="#c86a20"/><circle cx="297" cy="897" r="20" fill="#3ba860"/><circle cx="353" cy="897" r="20" fill="#1a5ca8"/><circle cx="461" cy="897" r="20" fill="#3ba830"/><circle cx="516" cy="897" r="20" fill="#2ab5ea"/></g>

<!-- finder -->
<rect x="57" y="838" width="44" height="39" rx="2" fill="url(#fin2)"/>
<path d="M59 838h26q-6 14-5 24h-3v15H59q-2 0-2-2v-35q0-2 2-2z" fill="url(#fin)"/>
<path d="M85 833q-8 12-7 29h-4M78 862q1 9 6 17" fill="none" stroke="#111" stroke-width="1.500"/>
<path d="M64 864q14 10 33-1" fill="none" stroke="#111" stroke-width="2"/>
<rect x="69" y="845" width="2.500" height="7" fill="#111"/><rect x="90" y="845" width="2.500" height="7" fill="#111"/>
<!-- launchpad -->
<circle cx="134" cy="857" r="24" fill="url(#silver)" stroke="#777"/>
<ellipse cx="136" cy="853" rx="14" ry="6.500" fill="#2a2a2e" transform="rotate(-40 136 853)"/>
<path d="M126 852l-6 1 4 5zM132 862l1 6 5-5z" fill="#2a2a2e"/><path d="M124 863l-5 7 7-4" stroke="#2a2a2e" stroke-width="2" fill="none"/>
<!-- mission control -->
<rect x="163" y="837" width="49" height="42" rx="4" fill="#3c3c3e"/>
<rect x="167" y="841" width="21" height="13" fill="#e8a040"/><rect x="167" y="845" width="21" height="3" fill="#fff3c8"/>
<rect x="191" y="848" width="16" height="19" fill="#2c8a4a"/><rect x="193" y="850" width="12" height="7" fill="#c6b560"/>
<rect x="172" y="859" width="18" height="14" fill="#e8e8e8"/><rect x="174" y="862" width="14" height="7" fill="#5a8a50"/>
<!-- firefox -->
<circle cx="244" cy="857" r="24" fill="#2a6bb8"/><circle cx="250" cy="848" r="11" fill="#5aa8e0"/>
<path d="M224 842q-6 10-6 18 2 21 25 23 19 0 25-18 3-9-1-19-1 12-9 17-9 6-17 0 8 1 11-4-7-1-10-4 3-3 2-7-6-2-7-7-7 3-13 1z" fill="#ee7a1e"/>
<path d="M265 848q6 10 2 20-5 12-18 14 16-10 16-34z" fill="#f8b82e"/>
<!-- mail -->
<circle cx="297" cy="857" r="23.500" fill="url(#grn)"/>
<path d="M310 875l6 9 2-14z" fill="#49b969"/>
<circle cx="297" cy="857" r="16" fill="none" stroke="#e8f7ea" stroke-width="3.500"/><circle cx="297" cy="857" r="7" fill="none" stroke="#e8f7ea" stroke-width="3.500"/><path d="M304 851v10q2 3 5 0" fill="none" stroke="#e8f7ea" stroke-width="3"/>
<!-- itunes -->
<circle cx="353" cy="857" r="24" fill="#dcdcdc"/><circle cx="353" cy="857" r="21.500" fill="url(#blu)" stroke="#111" stroke-width="1"/>
<path d="M347 848l15-4v22a4.500 4 0 1 1-3-3.500v-12l-9 2.500v15a4.500 4 0 1 1-3-3.700z" fill="#eaf2fa"/>
<!-- duck -->
<path d="M394 878q0-16 14-16 14 0 14 16q-14 5-28 0z" fill="#4a9e3a"/><ellipse cx="408" cy="850" rx="13" ry="11" fill="#58ad46"/><path d="M399 841l3-8 3 5 3-6 3 6 3-5 3 8z" fill="#4a9a38"/><circle cx="403" cy="848" r="2.500" fill="#3a8a2a"/><circle cx="413" cy="848" r="2.500" fill="#3a8a2a"/><path d="M396 856h24l-5 6h-14z" fill="#e0922a"/>
<!-- icq -->
<g fill="#32b520" stroke="#1a7a10" stroke-width=".7"><ellipse cx="461" cy="843" rx="7" ry="10"/><ellipse cx="473" cy="849" rx="7" ry="10" transform="rotate(55 473 849)"/><ellipse cx="473" cy="864" rx="7" ry="10" transform="rotate(-55 473 864)" /><ellipse cx="461" cy="871" rx="7" ry="10"/><ellipse cx="449" cy="849" rx="7" ry="10" transform="rotate(-55 449 849)"/></g>
<ellipse cx="449" cy="864" rx="7" ry="10" transform="rotate(55 449 864)" fill="#dd3030"/><circle cx="461" cy="857" r="5.500" fill="#f4c430" stroke="#b58a10"/>
<!-- skype -->
<rect x="492" y="833" width="48" height="48" rx="22" fill="url(#sky)"/>
<text x="500" y="873" style="font-size:42px;font-weight:bold;fill:#fff">S</text>
<!-- address book -->
<path d="M550 838l38-5 7 40-40 8z" fill="#caa46c" stroke="#6a4a28"/><path d="M550 838l7-1 4 43-6 1z" fill="#7a5a3c"/>
<text x="564" y="860" style="font-size:20px;fill:#ecdcb8">@</text>
<!-- calendar -->
<path d="M604 846l40-8 6 37-40 5z" fill="#f2f2f2" stroke="#555"/><path d="M604 846l40-8 1.500 9-40 6z" fill="#cf3a3a"/>
<text x="610" y="853" transform="rotate(-10 610 853)" style="font-size:7px;font-weight:bold;fill:#fff">МАРТ</text>
<text x="613" y="874" transform="rotate(-6 613 874)" style="font-size:23px;font-weight:bold;fill:#111">30</text>
<!-- vlc -->
<path d="M676 834h10l12 44h-28z" fill="#f08a12"/><path d="M674 847h14l3 10h-20z" fill="#e8e8e8"/><path d="M669 865h24l3 9h-30z" fill="#e8e8e8" opacity=".9"/><path d="M660 875l8-3-2 6h30l-2-6 8 3 2 8h-46z" fill="#f59a1a"/>
<!-- photobooth -->
<rect x="711" y="832" width="38" height="50" fill="#ddd"/><rect x="714" y="836" width="34" height="32" fill="#c81818"/><path d="M719 836v32M725 836v32M731 836v32M737 836v32M743 836v32" stroke="#8a0a0a"/>
<path d="M722 868l-3 12M738 868l3 12M722 874h16" stroke="#2a1810" stroke-width="1.500"/>
<path d="M749 847l12 4-10 33-12-4z" fill="#eee" stroke="#555" stroke-width=".6"/><rect x="744" y="853" width="9" height="7" fill="#7a4a28" transform="rotate(15 748 856)"/><rect x="741" y="863" width="9" height="7" fill="#6a3a20" transform="rotate(15 745 866)"/>
<!-- iphoto -->
<path d="M765 843l46-8 6 33-46 8z" fill="#eee" stroke="#777" stroke-width=".6"/><path d="M768 845l41-7 4 27-41 7z" fill="#c98026"/><path d="M768 845l41-7 2 8-42 8z" fill="#2c241c"/><path d="M790 847l-7 18M790 847l9 16" stroke="#221"/>
<rect x="778" y="860" width="37" height="22" rx="2" fill="#5c6a82" stroke="#333"/><circle cx="799" cy="871" r="8" fill="#22293c" stroke="#a8b4c8"/><circle cx="799" cy="871" r="3.500" fill="#3a6ad0"/><rect x="803" y="856" width="9" height="4" fill="#8a96a8"/>
<!-- sys prefs -->
<rect x="821" y="836" width="49" height="43" rx="3" fill="url(#silver)" stroke="#888"/>
<circle cx="845" cy="857" r="18" fill="#333"/><circle cx="845" cy="857" r="16" fill="none" stroke="#bbb" stroke-width="5" stroke-dasharray="5 4"/><circle cx="845" cy="857" r="11" fill="#c0c0c0" stroke="#444"/><circle cx="845" cy="857" r="5" fill="#555"/>
<!-- word -->
<path d="M882 843l9 29 10-22 9 22 10-29" fill="none" stroke="#2a9cdc" stroke-width="8" stroke-linecap="round" stroke-linejoin="round"/>
<!-- excel -->
<path d="M940 843l27 30" stroke="#55b745" stroke-width="8" stroke-linecap="round"/><path d="M969 841l-30 33" stroke="#2e9a38" stroke-width="8" stroke-linecap="round"/>
<!-- laptop -->
<circle cx="998" cy="846" r="11" fill="none" stroke="#777" opacity=".5"/><circle cx="998" cy="846" r="6" fill="none" stroke="#777" opacity=".5"/>
<rect x="993" y="846" width="37" height="28" rx="2" fill="#222"/><rect x="997" y="850" width="29" height="21" fill="#8a8684"/><path d="M993 851h4v5h-4zM1026 851h4v5h-4zM993 861h4v5h-4zM1026 861h4v5h-4z" fill="#e8c020"/><path d="M987 878l7-5h35l7 5z" fill="#2a2a2a"/>
<!-- users -->
<rect x="1045" y="837" width="25" height="26" fill="#dfe9f8" stroke="#3a8ad8"/><rect x="1053" y="843" width="27" height="27" fill="#fff" stroke="#2b7fdb"/><rect x="1053" y="843" width="27" height="4" fill="#2b7fdb"/><path d="M1058 850v14M1063 852v14M1068 848v14M1074 850v12" stroke="#3a6ab8" stroke-width="2"/>
<rect x="1076" y="855" width="9" height="14" fill="#eef" stroke="#2b7fdb"/>
<circle cx="1054" cy="856" r="6" fill="#d89050"/><path d="M1043 878q0-13 11-13 11 0 11 13z" fill="#5aaa3a"/><path d="M1051 866l3 6 3-6z" fill="#fff"/>
<rect x="1077" y="860" width="4.500" height="22" rx="1.500" fill="#f0282c"/><rect x="1085" y="860" width="4.500" height="22" rx="1.500" fill="#f0282c"/>
<!-- separator -->
<path d="M1103 860h10M1102 866h12M1101 872h14M1099 879h18M1098 886h20" stroke="#cfcac2" stroke-width="3"/>
<!-- folders -->
<path d="M1121 848q0-2 2-2h4l2-6h19l2 5h22q2 0 2 2v31h-53z" fill="url(#fold)"/><rect x="1121" y="848" width="53" height="30" rx="2" fill="url(#fold)"/>
<circle cx="1147" cy="864" r="12.500" fill="#6f9cbf"/><path d="M1144 856h6v7h4l-7 6-7-6h4zM1143 870h8v5h-8z" fill="#a6c9e2"/>
<rect x="1175" y="833" width="53" height="37" fill="#dcdcdc"/><rect x="1177" y="835" width="49" height="33" fill="#c9163a"/>
<rect x="1197" y="870" width="13" height="6" fill="#cfcfcf"/><rect x="1192" y="876" width="23" height="3" fill="#e8e8e8"/>
<text x="1182" y="856" style="font-size:10.500px;font-weight:bold;fill:#fff" textLength="41">||Parallels</text>
<path d="M1232 848q0-2 2-2h4l2-6h19l2 5h19q2 0 2 2v31h-50z" fill="url(#fold)"/><rect x="1232" y="848" width="50" height="30" rx="2" fill="url(#fold)"/><path d="M1246 853l12-3 1 10-12 3zM1260 849l12-3 1 11-12 3zM1245 865l12-3 1 10-14 2zM1259 861l12-2 1 10-13 2z" fill="#7aa5c4"/>
<path d="M1287 848q0-2 2-2h4l2-6h19l2 5h19q2 0 2 2v31h-50z" fill="url(#fold)"/><rect x="1287" y="848" width="50" height="30" rx="2" fill="url(#fold)"/><path d="M1301 853l12-3 1 10-12 3zM1315 849l12-3 1 11-12 3zM1300 865l12-3 1 10-14 2zM1314 861l12-2 1 10-13 2z" fill="#7aa5c4"/>
<!-- trash -->
<ellipse cx="1366" cy="842" rx="21" ry="8" fill="#e4e4e4" stroke="#777"/><path d="M1346 843l4 37q16 5 32 0l4-37q-20 8-40 0z" fill="#555"/><path d="M1352 848l2 32M1358 850l1 32M1366 851v32M1374 850l-1 32M1380 848l-2 32M1348 856q18 6 36 0M1349 865q17 6 34 0M1350 874q16 6 32 0" stroke="#aaa" fill="none" stroke-width=".9"/>
<path d="M1352 842q6-6 12-4 8-4 14 3-12 5-26 1z" fill="#fff"/>
</svg>
</body></html>
